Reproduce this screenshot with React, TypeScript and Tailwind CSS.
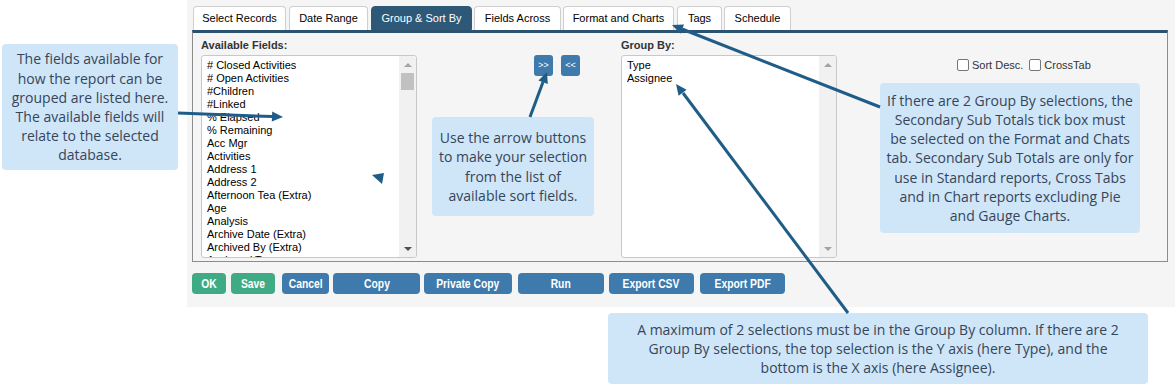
import React from "react";

const tabs = [
  { label: "Select Records", cls: "w-[93px] ml-0" },
  { label: "Date Range", cls: "w-[79px] ml-[3px]" },
  { label: "Group & Sort By", cls: "w-[101px] ml-[3px]", active: true },
  { label: "Fields Across", cls: "w-[87px] ml-[2px]" },
  { label: "Format and Charts", cls: "w-[111px] ml-[2px]" },
  { label: "Tags", cls: "w-[45px] ml-[3px]" },
  { label: "Schedule", cls: "w-[67px] ml-[2px]" },
];

const availableFields = [
  "# Closed Activities",
  "# Open Activities",
  "#Children",
  "#Linked",
  "% Elapsed",
  "% Remaining",
  "Acc Mgr",
  "Activities",
  "Address 1",
  "Address 2",
  "Afternoon Tea (Extra)",
  "Age",
  "Analysis",
  "Archive Date (Extra)",
  "Archived By (Extra)",
  "Assigned To",
];

const groupBy = ["Type", "Assignee"];

const actions = [
  { label: "OK", cls: "w-[34px] ml-0 bg-[#3fab84]" },
  { label: "Save", cls: "w-[44px] ml-[5px] bg-[#3fab84]" },
  { label: "Cancel", cls: "w-[47px] ml-[7px] bg-[#3e7aab]" },
  { label: "Copy", cls: "w-[87px] ml-[4px] bg-[#3e7aab]" },
  { label: "Private Copy", cls: "w-[88px] ml-[4px] bg-[#3e7aab]" },
  { label: "Run", cls: "w-[86px] ml-[6px] bg-[#3e7aab]" },
  { label: "Export CSV", cls: "w-[85px] ml-[5px] bg-[#3e7aab]" },
  { label: "Export PDF", cls: "w-[85px] ml-[6px] bg-[#3e7aab]" },
];

const ui = { fontFamily: '"Liberation Sans", Arial, sans-serif' };
const note = { fontFamily: '"Open Sans", "Noto Sans", sans-serif' };

// callout boxes, text broken as in the screenshot
const callouts = [
  {
    cls: "left-[2px] top-[44px] w-[176px] h-[126px]",
    lines: [
      "The fields available for",
      "how the report can be",
      "grouped are listed here.",
      "The available fields will",
      "relate to the selected",
      "database.",
    ],
  },
  {
    cls: "left-[432px] top-[117px] w-[162px] h-[99px]",
    lines: [
      "Use the arrow buttons",
      "to make your selection",
      "from the list of",
      "available sort fields.",
    ],
  },
  {
    cls: "left-[880px] top-[83px] w-[260px] h-[150px]",
    lines: [
      "If there are 2 Group By selections, the",
      "Secondary Sub Totals tick box must",
      "be selected on the Format and Chats",
      "tab. Secondary Sub Totals are only for",
      "use in Standard reports, Cross Tabs",
      "and in Chart reports excluding Pie",
      "and Gauge Charts.",
    ],
  },
  {
    cls: "left-[608px] top-[313px] w-[540px] h-[71px]",
    lines: [
      "A maximum of 2 selections must be in the Group By column. If there are 2",
      "Group By selections, the top selection is the Y axis (here Type), and the",
      "bottom is the X axis (here Assignee).",
    ],
  },
];

const Scrollbar = ({ enabled }: { enabled: boolean }) => (
  <div className="w-[17px] h-full bg-[#f1f1f1] flex flex-col items-center">
    <div className="h-[17px] flex items-center justify-center">
      <div className="w-0 h-0 border-x-[4px] border-x-transparent border-b-[4px] border-b-[#a3a3a3]" />
    </div>
    {enabled && <div className="w-[13px] h-[17px] bg-[#c1c1c1]" />}
    <div className="flex-1" />
    <div className="h-[17px] flex items-center justify-center">
      <div
        className={`w-0 h-0 border-x-[4px] border-x-transparent border-t-[4px] ${
          enabled ? "border-t-[#505050]" : "border-t-[#a3a3a3]"
        }`}
      />
    </div>
  </div>
);

const ListBox = ({ items, enabled }: { items: string[]; enabled: boolean }) => (
  <div className="w-[216px] h-[203px] bg-white border border-[#c8c8c8] rounded-[3px] flex overflow-hidden">
    <div className="flex-1 pl-[5px] pt-[3px] text-[11px] leading-[13px] text-black overflow-hidden">
      {items.map((item) => (
        <div key={item} className="whitespace-nowrap">
          {item}
        </div>
      ))}
    </div>
    <Scrollbar enabled={enabled} />
  </div>
);

const Check = ({ label }: { label: string }) => (
  <label className="flex items-center gap-[3px] text-[11px] text-[#333]">
    <span className="w-[12px] h-[12px] bg-white border border-[#767676] rounded-[2px]" />
    {label}
  </label>
);

const Arrows = () => (
  <svg
    className="absolute left-0 top-0 pointer-events-none"
    width="1175"
    height="384"
    viewBox="0 0 1175 384"
  >
    <g stroke="#1f5d88" strokeWidth="3" fill="none">
      <line x1="178" y1="113" x2="273" y2="116.6" />
      <line x1="530" y1="117" x2="543" y2="82" />
      <line x1="880" y1="107" x2="682" y2="29" />
      <line x1="848" y1="313" x2="683" y2="93" />
    </g>
    <g fill="#1f5d88">
      <polygon points="283,117 272.2,111.6 271.8,121.6" />
      <polygon points="547,72 547.8,84.1 538.4,80.5" />
      <polygon points="672,25 684,24.4 680.4,33.7" />
      <polygon points="676,84 686.6,89.8 678.6,95.8" />
      <polygon points="372,175 384,173 382,184" />
    </g>
  </svg>
);

export default function App() {
  return (
    <div className="relative w-[1175px] h-[384px] bg-white overflow-hidden" style={ui}>
      <div className="ml-[187px] w-[988px] h-[307px] bg-[#f5f5f5] pt-[6px] pl-[5px]">
        {/* tabs */}
        <div className="flex h-[24px] pl-[1px]">
          {tabs.map((t) => (
            <div
              key={t.label}
              className={`${t.cls} h-[24px] flex items-center justify-center rounded-t-[4px] text-[11px] border ${
                t.active
                  ? "bg-[#2d5877] border-[#2d5877] text-white"
                  : "bg-white border-[#cfcfcf] border-b-0 text-black"
              }`}
            >
              {t.label}
            </div>
          ))}
        </div>

        {/* panel */}
        <div className="w-[976px] h-[232px] border-x border-b border-[#8c8c8c] border-t-[3px] border-t-[#2b5370] flex items-start pl-[8px] pt-[6px]">
          <div className="w-[216px]">
            <div className="h-[13px] text-[11px] leading-[13px] font-bold text-[#333] mb-[3px]">
              Available Fields:
            </div>
            <ListBox items={availableFields} enabled />
          </div>

          <div className="w-[204px] pt-[16px] pl-[117px] flex gap-[8px]">
            <div className="w-[19px] h-[21px] rounded-[3px] bg-[#3e7aab] text-white text-[9px] flex items-center justify-center">
              &gt;&gt;
            </div>
            <div className="w-[19px] h-[21px] rounded-[3px] bg-[#3e7aab] text-white text-[9px] flex items-center justify-center">
              &lt;&lt;
            </div>
          </div>

          <div className="w-[216px]">
            <div className="h-[13px] text-[11px] leading-[13px] font-bold text-[#333] mb-[3px]">
              Group By:
            </div>
            <ListBox items={groupBy} enabled={false} />
          </div>

          <div className="pl-[120px] pt-[18px] flex gap-[6px]">
            <Check label="Sort Desc." />
            <Check label="CrossTab" />
          </div>
        </div>

        {/* action buttons */}
        <div className="flex mt-[11px]">
          {actions.map((a) => (
            <div
              key={a.label}
              className={`${a.cls} h-[21px] rounded-[4px] text-white text-[12px] font-bold flex items-center justify-center`}
            >
              <span className="inline-block scale-x-[0.86] whitespace-nowrap">{a.label}</span>
            </div>
          ))}
        </div>
      </div>

      {/* callouts */}
      {callouts.map((c, i) => (
        <div
          key={i}
          className={`absolute ${c.cls} rounded-[4px] bg-[#cfe5f8] text-[#36465a] text-[14px] leading-[19.2px] text-center flex flex-col items-center justify-center`}
          style={note}
        >
          {c.lines.map((l) => (
            <div key={l} className="whitespace-nowrap">
              {l}
            </div>
          ))}
        </div>
      ))}

      <Arrows />
    </div>
  );
}
